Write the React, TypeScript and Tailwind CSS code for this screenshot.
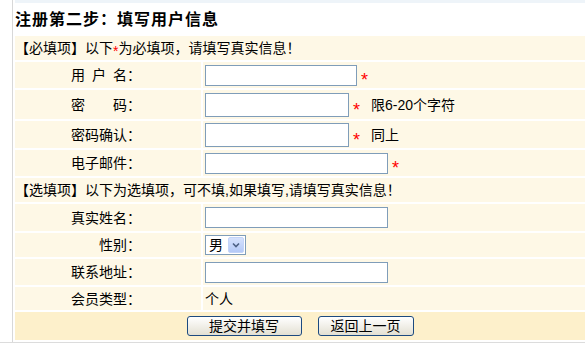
export default function App() {
  const cell = "bg-[#fef8e6]";
  const input = "bg-white border border-[#7f9db9]";
  const star = <span className="ml-[4px] text-[18px] leading-none text-[#ff0000] relative top-[5px]">*</span>;

  const Label = ({ children }: { children: React.ReactNode }) => (
    <div className={`${cell} w-[186px] shrink-0 flex items-center justify-end pr-[60px]`}>{children}</div>
  );

  return (
    <div className="w-[585px] h-[348px] bg-white text-[14px] leading-none text-black font-['Liberation_Sans','Noto_Sans_CJK_SC',sans-serif]">
      <div className="w-[585px] border-b border-[#dcdcdc] pl-[12px]">
        <div className="border-l border-[#d8d8d8] pl-[2px] pb-[2px]">
          <div className="h-[3px] bg-[#eef4f9]" />
          <div className="h-[33px] flex items-center">
            <h1 className="text-[16px] font-bold tracking-[1px]">注册第二步：填写用户信息</h1>
          </div>

          <div className="flex flex-col gap-[2px] bg-white">
            <div className={`${cell} h-[24px] flex items-center`}>
              【必填项】以下<span className="text-[#ff0000] relative top-[3px]">*</span>为必填项，请填写真实信息！
            </div>

            <div className="h-[26px] flex gap-[2px]">
              <Label>
                用<span className="inline-block w-[7px]" />户<span className="inline-block w-[7px]" />名：
              </Label>
              <div className={`${cell} flex-1 flex items-center pl-[2px]`}>
                <div className={`${input} w-[152px] h-[21px]`} />
                {star}
              </div>
            </div>

            <div className="h-[29px] flex gap-[2px]">
              <Label>
                密<span className="inline-block w-[28px]" />码：
              </Label>
              <div className={`${cell} flex-1 flex items-center pl-[2px]`}>
                <div className={`${input} w-[144px] h-[24px]`} />
                {star}
                <span className="ml-[11px]">限6-20个字符</span>
              </div>
            </div>

            <div className="h-[27px] flex gap-[2px]">
              <Label>密码确认：</Label>
              <div className={`${cell} flex-1 flex items-center pl-[2px]`}>
                <div className={`${input} w-[144px] h-[24px]`} />
                {star}
                <span className="ml-[11px]">同上</span>
              </div>
            </div>

            <div className="h-[26px] flex gap-[2px]">
              <Label>电子邮件：</Label>
              <div className={`${cell} flex-1 flex items-center pl-[2px]`}>
                <div className={`${input} w-[183px] h-[21px]`} />
                {star}
              </div>
            </div>

            <div className={`${cell} h-[24px] flex items-center`}>
              【选填项】以下为选填项，可不填,如果填写,请填写真实信息！
            </div>

            <div className="h-[27px] flex gap-[2px]">
              <Label>真实姓名：</Label>
              <div className={`${cell} flex-1 flex items-center pl-[2px]`}>
                <div className={`${input} w-[183px] h-[21px]`} />
              </div>
            </div>

            <div className="h-[24px] flex gap-[2px]">
              <Label>性别：</Label>
              <div className={`${cell} flex-1 flex items-center pl-[2px]`}>
                <div className={`${input} w-[41px] h-[20px] flex items-center justify-between pl-[3px] pr-[1px]`}>
                  <span>男</span>
                  <div className="w-[16px] h-[16px] rounded-[2px] bg-gradient-to-b from-[#d6e2fd] to-[#b4c9f7] border border-[#c4d4f8] flex items-center justify-center">
                    <svg width="8" height="6" viewBox="0 0 8 6">
                      <path d="M1 1.5 L4 4.5 L7 1.5" fill="none" stroke="#4d6185" strokeWidth="1.6" />
                    </svg>
                  </div>
                </div>
              </div>
            </div>

            <div className="h-[26px] flex gap-[2px]">
              <Label>联系地址：</Label>
              <div className={`${cell} flex-1 flex items-center pl-[2px]`}>
                <div className={`${input} w-[183px] h-[21px]`} />
              </div>
            </div>

            <div className="h-[23px] flex gap-[2px]">
              <Label>会员类型：</Label>
              <div className={`${cell} flex-1 flex items-center pl-[2px]`}>个人</div>
            </div>

            <div className="h-[28px] bg-[#fdf0cb] flex items-center justify-center gap-[16px]">
              <button className="w-[115px] h-[20px] rounded-[3px] border border-[#1c4a80] bg-gradient-to-b from-white to-[#e3e0d3] text-[14px] leading-none">
                提交并填写
              </button>
              <button className="w-[96px] h-[20px] rounded-[3px] border border-[#1c4a80] bg-gradient-to-b from-white to-[#e3e0d3] text-[14px] leading-none">
                返回上一页
              </button>
            </div>
          </div>
        </div>
      </div>
    </div>
  );
}
